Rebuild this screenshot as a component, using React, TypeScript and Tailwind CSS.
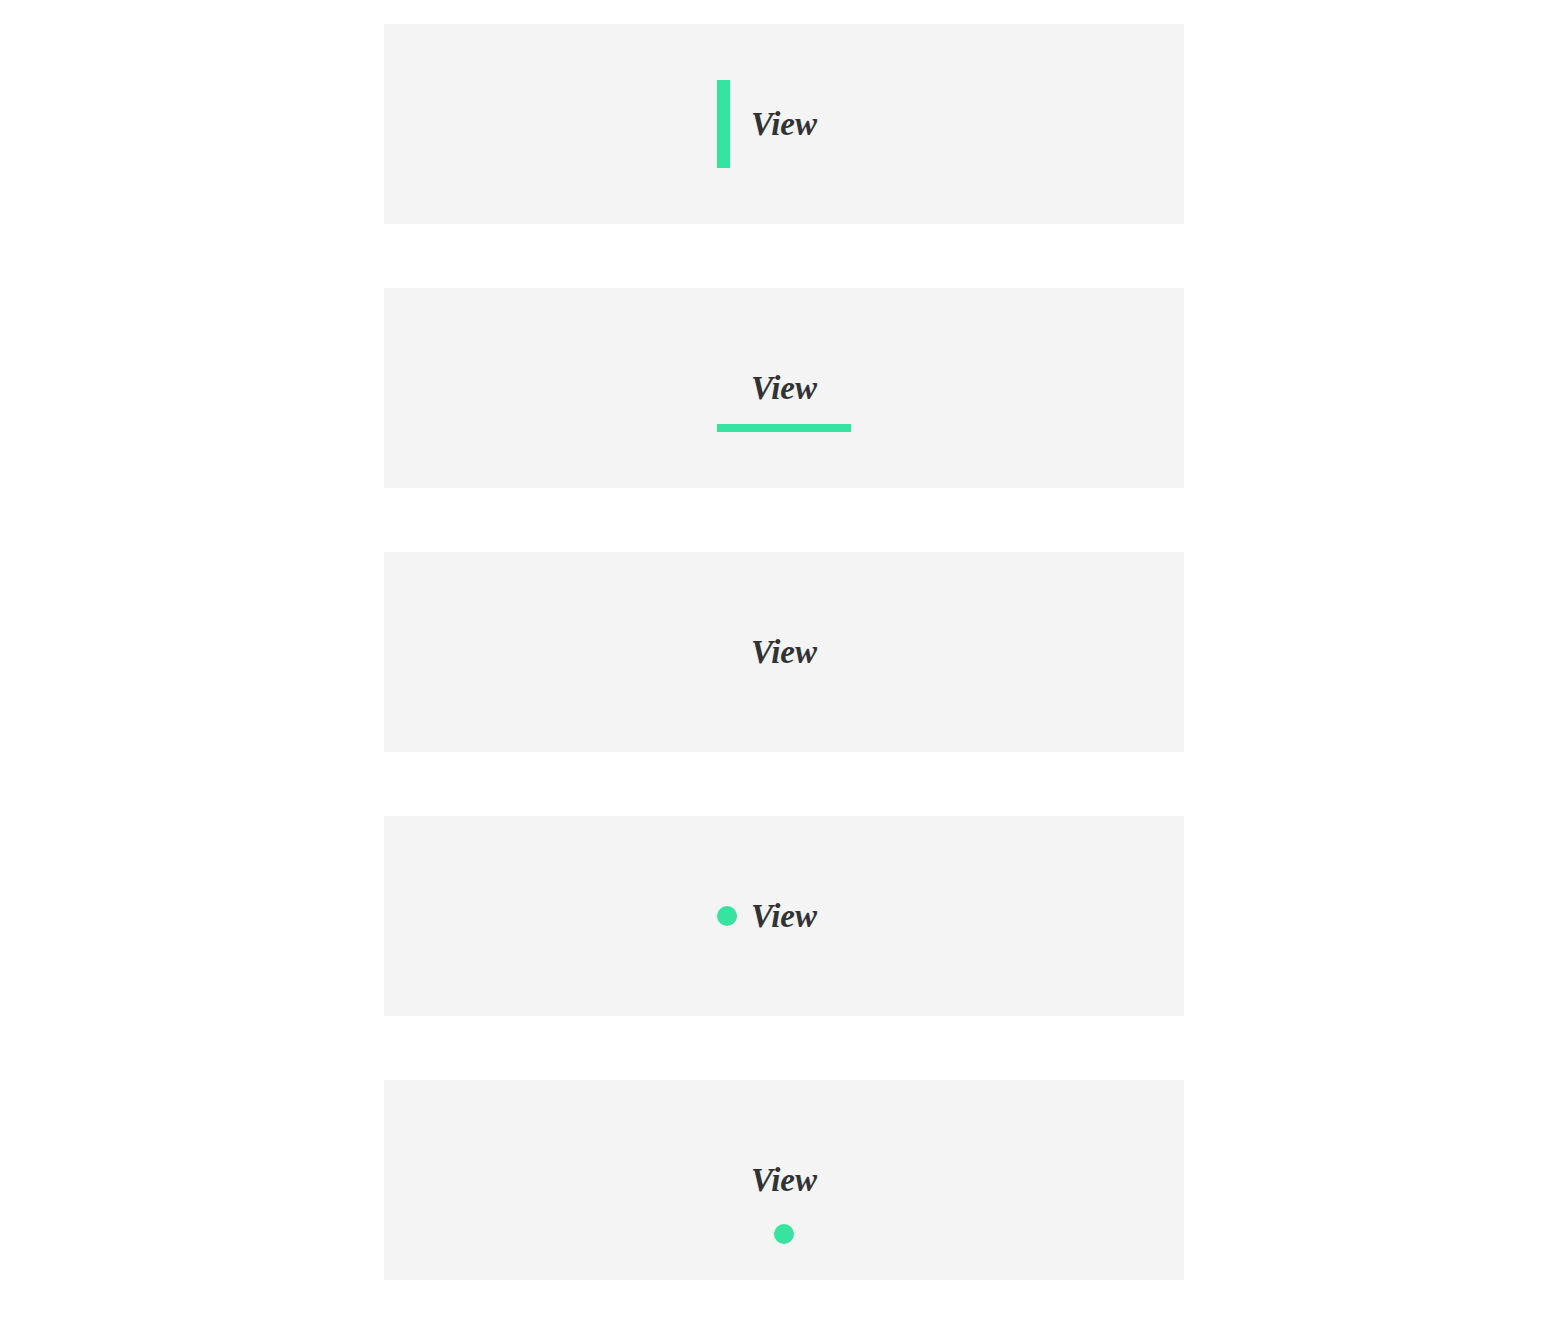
const variants = ["bar", "underline", "plain", "dot", "dotBelow"] as const;

type Variant = (typeof variants)[number];

function ViewLink({ variant }: { variant: Variant }) {
  return (
    <a
      href="#"
      className="relative flex h-[88px] w-[134px] items-center justify-center text-[33px] font-bold italic text-[#333333] [font-family:'Liberation_Serif',serif]"
    >
      {variant === "bar" && <span className="absolute left-0 top-0 h-full w-[13px] bg-[#36e4a0]" />}
      {variant === "underline" && <span className="absolute bottom-0 left-0 h-[8px] w-full bg-[#36e4a0]" />}
      {variant === "dot" && (
        <span className="absolute left-0 top-1/2 h-5 w-5 -translate-y-1/2 rounded-full bg-[#36e4a0]" />
      )}
      {variant === "dotBelow" && (
        <span className="absolute left-1/2 top-full h-5 w-5 -translate-x-1/2 rounded-full bg-[#36e4a0]" />
      )}
      <span className="leading-none">View</span>
    </a>
  );
}

export default function App() {
  return (
    <div className="flex min-h-screen w-full flex-col items-center gap-16 bg-white pb-12 pl-2 pt-6">
      {variants.map((v) => (
        <div key={v} className="flex h-[200px] w-[800px] items-center justify-center bg-[#f4f4f4]">
          <ViewLink variant={v} />
        </div>
      ))}
    </div>
  );
}
